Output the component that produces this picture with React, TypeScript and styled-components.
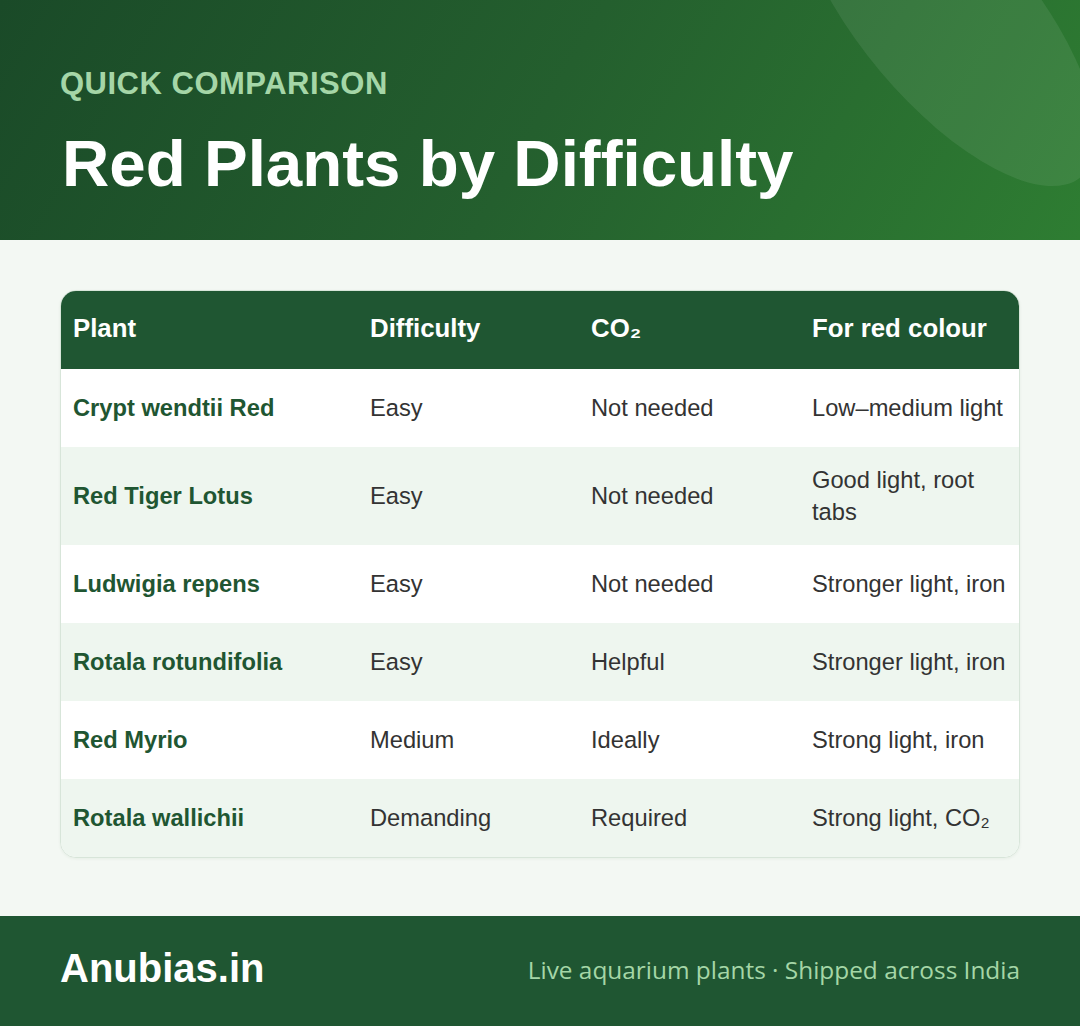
import React from "react";
import styled, { createGlobalStyle } from "styled-components";

const GlobalStyle = createGlobalStyle`
  html, body { margin: 0; padding: 0; }
  body {
    background: #f3f8f3;
    font-family: "Liberation Sans", Arial, sans-serif;
    -webkit-font-smoothing: antialiased;
  }
`;

const Page = styled.div`
  width: 1080px;
  height: 1026px;
  display: flex;
  flex-direction: column;
  background: #f3f8f3;
  overflow: hidden;
`;

const Hero = styled.header`
  position: relative;
  height: 240px;
  box-sizing: border-box;
  padding: 66px 60px 0 60px;
  background: linear-gradient(120deg, #1a4a28 0%, #245f2e 50%, #2e7d32 100%);
  overflow: hidden;
`;

const Blob = styled.div`
  position: absolute;
  left: 736px;
  top: -70px;
  width: 420px;
  height: 172px;
  border-radius: 50%;
  background: rgba(255, 255, 255, 0.08);
  transform: rotate(50deg);
`;

const Kicker = styled.div`
  position: relative;
  font-size: 31px;
  font-weight: 700;
  letter-spacing: 0.5px;
  color: #a5d6a7;
  line-height: 36px;
`;

const Title = styled.h1`
  position: relative;
  margin: 24px 0 0 2px;
  font-size: 65.5px;
  font-weight: 700;
  line-height: 76px;
  color: #ffffff;
`;

const Main = styled.main`
  flex: 1;
  box-sizing: border-box;
  padding: 50px 60px 0 60px;
`;

const Card = styled.div`
  border: 1px solid #d7e5d9;
  border-radius: 16px;
  overflow: hidden;
  background: #ffffff;
  box-shadow: 0 1px 3px rgba(30, 80, 40, 0.06);
`;

const Row = styled.div<{ $variant: "head" | "odd" | "even" }>`
  display: grid;
  grid-template-columns: 297px 221px 221px 1fr;
  align-items: center;
  min-height: 78px;
  background: ${(p) =>
    p.$variant === "head" ? "#1f5632" : p.$variant === "even" ? "#eef6ef" : "#ffffff"};
`;

const Cell = styled.div<{ $kind: "head" | "name" | "text" }>`
  box-sizing: border-box;
  padding: ${(p) => (p.$kind === "head" ? "15px 12px 19px" : "17px 12px")};
  line-height: 32px;
  font-size: ${(p) => (p.$kind === "head" ? "25.8px" : "23.7px")};
  font-weight: ${(p) => (p.$kind === "text" ? 400 : 700)};
  color: ${(p) =>
    p.$kind === "head" ? "#ffffff" : p.$kind === "name" ? "#1f5632" : "#333333"};
`;

const Footer = styled.footer`
  height: 110px;
  box-sizing: border-box;
  padding: 0 60px 6px;
  background: #1f5632;
  display: flex;
  align-items: center;
  justify-content: space-between;
`;

const Brand = styled.div`
  font-size: 40px;
  font-weight: 700;
  color: #ffffff;
`;

const Tagline = styled.div`
  font-family: "Open Sans", "Noto Sans", sans-serif;
  font-size: 24.4px;
  color: #a5d6a7;
  padding-top: 2px;
`;

const headers = ["Plant", "Difficulty", "CO₂", "For red colour"];

const rows: [string, string, string, string][] = [
  ["Crypt wendtii Red", "Easy", "Not needed", "Low–medium light"],
  ["Red Tiger Lotus", "Easy", "Not needed", "Good light, root tabs"],
  ["Ludwigia repens", "Easy", "Not needed", "Stronger light, iron"],
  ["Rotala rotundifolia", "Easy", "Helpful", "Stronger light, iron"],
  ["Red Myrio", "Medium", "Ideally", "Strong light, iron"],
  ["Rotala wallichii", "Demanding", "Required", "Strong light, CO₂"],
];

export default function App() {
  return (
    <>
      <GlobalStyle />
      <Page>
        <Hero>
          <Blob />
          <Kicker>QUICK COMPARISON</Kicker>
          <Title>Red Plants by Difficulty</Title>
        </Hero>
        <Main>
          <Card>
            <Row $variant="head">
              {headers.map((h) => (
                <Cell key={h} $kind="head">
                  {h}
                </Cell>
              ))}
            </Row>
            {rows.map((r, i) => (
              <Row key={r[0]} $variant={i % 2 === 0 ? "odd" : "even"}>
                <Cell $kind="name">{r[0]}</Cell>
                <Cell $kind="text">{r[1]}</Cell>
                <Cell $kind="text">{r[2]}</Cell>
                <Cell $kind="text">{r[3]}</Cell>
              </Row>
            ))}
          </Card>
        </Main>
        <Footer>
          <Brand>Anubias.in</Brand>
          <Tagline>Live aquarium plants · Shipped across India</Tagline>
        </Footer>
      </Page>
    </>
  );
}
